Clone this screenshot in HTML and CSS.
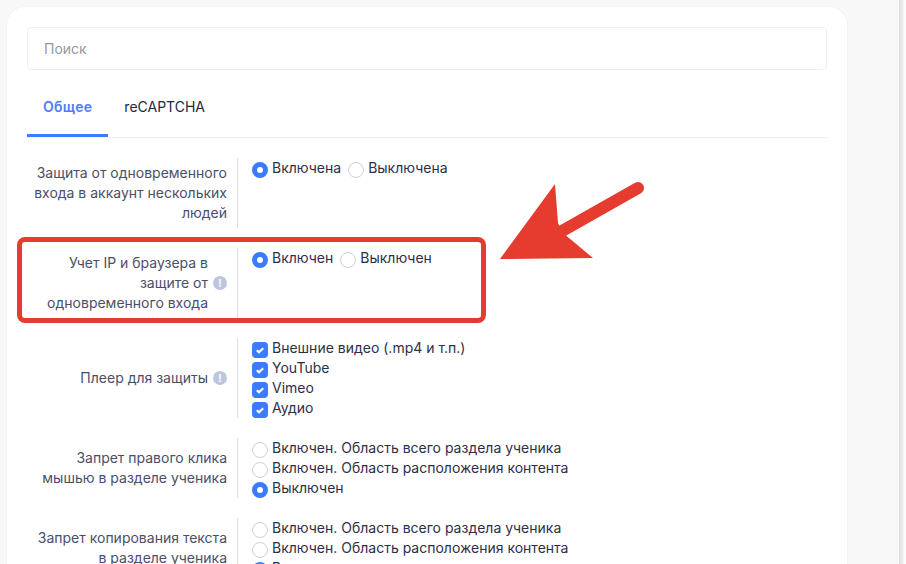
FILE: index.html
```html
<!DOCTYPE html>
<html lang="ru">
<head>
<meta charset="utf-8">
<title>Настройки</title>
<link rel="stylesheet" href="styles.css">
</head>
<body>
<main class="page">
  <section class="card">
    <div class="search">Поиск</div>
    <nav class="tabs">
      <a class="tab active">Общее</a>
      <a class="tab">reCAPTCHA</a>
    </nav>
    <div class="row">
      <div class="label">Защита от одновременного входа в аккаунт нескольких людей</div>
      <div class="value inline">
        <label class="opt"><span class="radio on"></span>Включена</label>
        <label class="opt"><span class="radio"></span>Выключена</label>
      </div>
    </div>
    <div class="row">
      <div class="label hint">Учет IP и браузера в защите от одновременного входа<span class="info">!</span></div>
      <div class="value inline">
        <label class="opt"><span class="radio on"></span>Включен</label>
        <label class="opt"><span class="radio"></span>Выключен</label>
      </div>
    </div>
    <div class="row">
      <div class="label hint">Плеер для защиты<span class="info">!</span></div>
      <div class="value">
        <label class="opt"><span class="check"><svg viewBox="0 0 16 16" width="16" height="16"><path d="M4.800 8.200l2.200 2.100 4.200-4.100" fill="none" stroke="#fff" stroke-width="2.200"/></svg></span>Внешние видео (.mp4 и т.п.)</label>
        <label class="opt"><span class="check"><svg viewBox="0 0 16 16" width="16" height="16"><path d="M4.800 8.200l2.200 2.100 4.200-4.100" fill="none" stroke="#fff" stroke-width="2.200"/></svg></span>YouTube</label>
        <label class="opt"><span class="check"><svg viewBox="0 0 16 16" width="16" height="16"><path d="M4.800 8.200l2.200 2.100 4.200-4.100" fill="none" stroke="#fff" stroke-width="2.200"/></svg></span>Vimeo</label>
        <label class="opt"><span class="check"><svg viewBox="0 0 16 16" width="16" height="16"><path d="M4.800 8.200l2.200 2.100 4.200-4.100" fill="none" stroke="#fff" stroke-width="2.200"/></svg></span>Аудио</label>
      </div>
    </div>
    <div class="row">
      <div class="label">Запрет правого клика мышью в разделе ученика</div>
      <div class="value">
        <label class="opt"><span class="radio"></span>Включен. Область всего раздела ученика</label>
        <label class="opt"><span class="radio"></span>Включен. Область расположения контента</label>
        <label class="opt"><span class="radio on"></span>Выключен</label>
      </div>
    </div>
    <div class="row">
      <div class="label">Запрет копирования текста в разделе ученика</div>
      <div class="value">
        <label class="opt"><span class="radio"></span>Включен. Область всего раздела ученика</label>
        <label class="opt"><span class="radio"></span>Включен. Область расположения контента</label>
        <label class="opt"><span class="radio on"></span>Выключен</label>
      </div>
    </div>
  </section>
</main>
<div class="frame"></div>
<svg class="arrow" width="146" height="80" viewBox="0 0 146 80">
  <path d="M138 8L55 55" fill="none" stroke="#e63c30" stroke-width="12" stroke-linecap="round"/>
  <path d="M0 79L55 4L58 43L63 53L93 78Z" fill="#e63c30"/>
</svg>
<div class="edge"></div>
</body>
</html>
```
FILE: styles.css
```css
html, body { margin: 0; height: 100%; }
body {
  background: #f8f8f9;
  font-family: Inter, "Noto Sans", sans-serif;
  font-size: 14px;
  line-height: 20px;
  color: #2c2f4a;
  overflow: hidden;
  position: relative;
}
.page { padding: 7px 59px 0 7px; }
.card {
  background: #fff;
  border-radius: 18px 18px 0 0;
  box-shadow: 0 0 0 1px #f2f2f7;
  padding: 20px;
}
.search {
  height: 41px;
  line-height: 42px;
  border: 1px solid #eff0f5;
  border-radius: 4px;
  padding-left: 16px;
  color: #98999f;
}
.tabs {
  display: flex;
  margin: 21px 0 20px;
  height: 46px;
  border-bottom: 1px solid #eff0f5;
}
.tab { padding: 6px 16px 0; height: 40px; color: #23263f; }
.tab.active {
  color: #4d7cfe;
  font-weight: 600;
  letter-spacing: 0.3px;
  border-bottom: 3px solid #3b7cff;
  height: 37px;
}
.row { display: flex; margin-bottom: 20px; }
.label {
  position: relative;
  box-sizing: border-box;
  flex: none;
  width: 211px;
  padding: 5px 10px 5px 0;
  border-right: 1px solid #dddee3;
  display: flex;
  align-items: center;
  justify-content: flex-end;
  text-align: right;
  color: #4b4e69;
}
.label.hint { padding-right: 29px; }
.info {
  position: absolute;
  right: 10px;
  top: 50%;
  margin-top: -7px;
  width: 14px;
  height: 14px;
  border-radius: 50%;
  background: #bcc6dd;
  color: #fff;
  font-size: 10px;
  font-weight: 700;
  line-height: 14px;
  text-align: center;
}
.value { padding-left: 14px; }
.value.inline { display: flex; gap: 7px; align-items: flex-start; }
.opt { display: flex; height: 20px; }
.radio, .check {
  box-sizing: border-box;
  flex: none;
  width: 16px;
  height: 16px;
  margin: 4px 4px 0 0;
  border-radius: 50%;
  border: 1px solid #cfd0d4;
  background: #fff;
}
.radio.on { border: 5px solid #3b7cff; }
.check { border: 0; border-radius: 4px; background: #3b7cff; }
.check svg { display: block; }
.frame {
  position: absolute;
  left: 17px;
  top: 237px;
  width: 459px;
  height: 76px;
  border: 5px solid #e63c30;
  border-radius: 8px;
}
.arrow { position: absolute; left: 500px; top: 180px; }
.edge {
  position: absolute;
  right: 0;
  top: 0;
  bottom: 0;
  width: 7px;
  background: linear-gradient(90deg, #dcdcdc, #fff);
}
```
